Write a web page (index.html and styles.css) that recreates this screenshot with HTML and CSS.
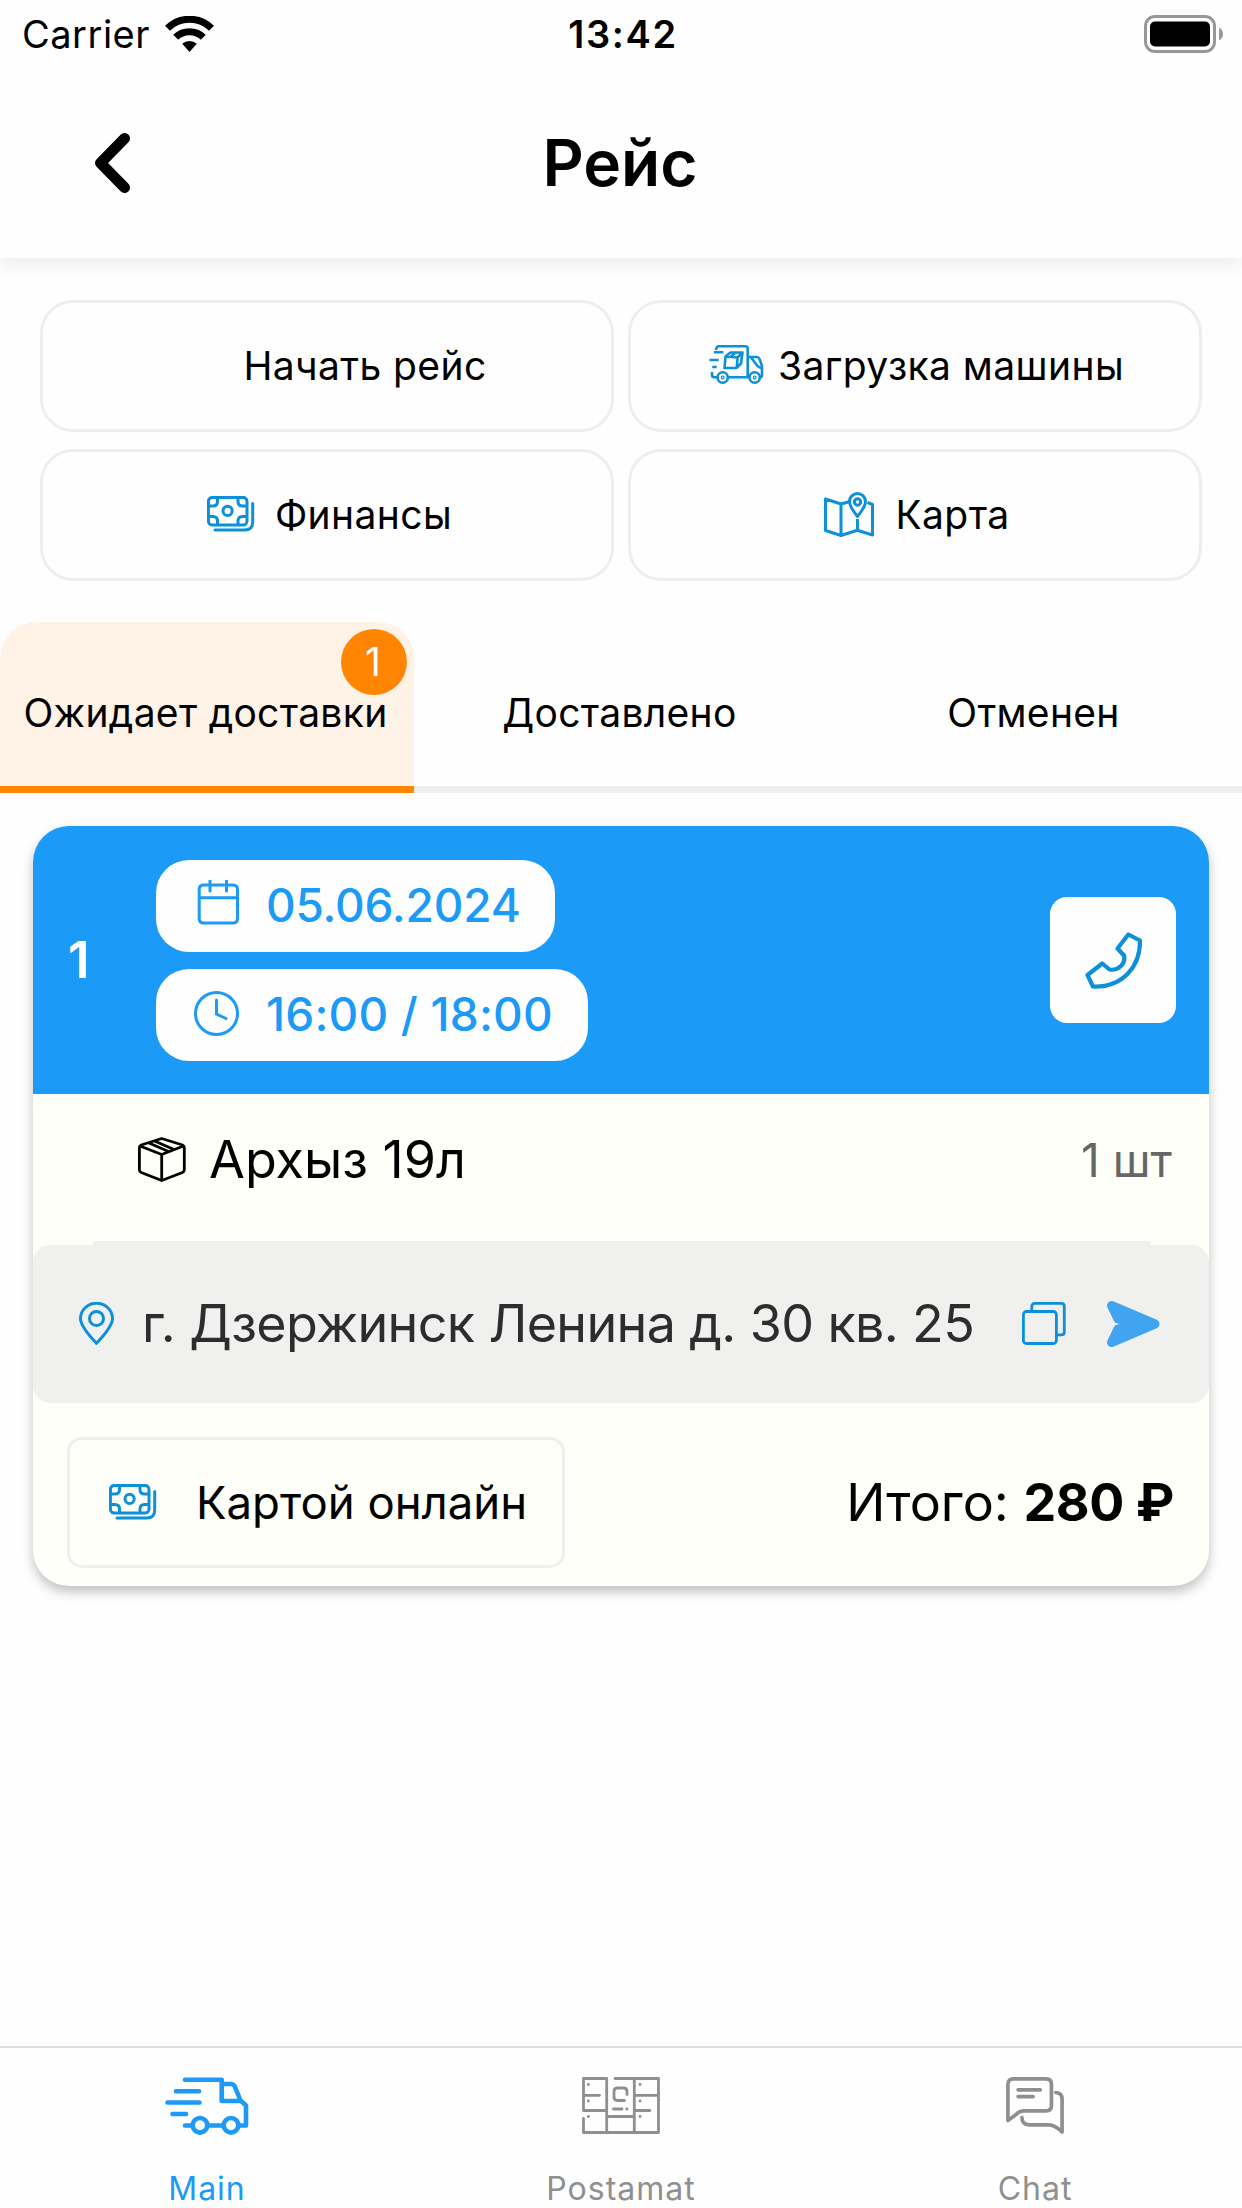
FILE: index.html
```html
<!DOCTYPE html>
<html lang="ru">
<head>
    <meta charset="UTF-8">
    <title>Рейс</title>
    <link rel="stylesheet" href="styles.css">
</head>
<body>
    <svg class="sprite" width="0" height="0">
        <symbol id="icon-money" viewBox="0 0 48 36">
            <rect x="1.4" y="1.4" width="38.6" height="27.6" rx="4"/>
            <circle cx="20.6" cy="14.9" r="4.6"/>
            <path d="M10.5 1.5v4q0 4.5-4.5 4.5H1.5M31 1.5v4q0 4.5 4.5 4.5H40M10.5 29v-4q0-4.5-4.5-4.5H1.5M31 29v-4q0-4.5 4.5-4.5H40"/>
            <path d="M45.7 7.5v18.5q0 8-8 8H8" stroke-linecap="round"/>
        </symbol>
    </svg>

    <div class="status-bar">
        <div class="carrier">
            <span>Carrier</span>
            <svg width="49" height="36" viewBox="0 0 49 36" fill="none" stroke="#000" stroke-width="7">
                <path d="M2.5 12.2a31.5 31.5 0 0 1 44 0"/>
                <path d="M10.7 21.3a20 20 0 0 1 27.6 0"/>
                <path d="M24.5 36l-7.3-8.2a11 11 0 0 1 14.6 0z" fill="#000" stroke="none"/>
            </svg>
        </div>
        <div class="time">13:42</div>
        <svg class="battery" width="80" height="38" viewBox="0 0 80 38">
            <rect x="1.5" y="1.5" width="69" height="35" rx="9.5" fill="none" stroke="#979797" stroke-width="3"/>
            <rect x="6" y="6.5" width="60" height="25" rx="5" fill="#000"/>
            <path d="M75 12.5q4 2 4 6.5t-4 6.5z" fill="#979797"/>
        </svg>
    </div>

    <header class="header">
        <svg class="back" width="36" height="60" viewBox="0 0 36 60">
            <path d="M30.5 5.5L6.5 30l24 24.5" fill="none" stroke="#000" stroke-width="11" stroke-linecap="round" stroke-linejoin="round"/>
        </svg>
        <h1>Рейс</h1>
    </header>

    <div class="actions">
        <div class="action action-start"><span>Начать рейс</span></div>
        <div class="action action-load">
            <svg class="icon" width="56" height="40" viewBox="0 0 56 40" stroke-width="2.6">
                <path d="M6.7 5l1-2.5q.4-1.2 2-1.2H36.5q2.2 0 2.2 2.2v28.5M5 7.3h9.3M.5 15h9.2M3.3 22h4.4M3 27v3q0 2.3 2.5 2.3H8M19 32.3h21.5"/>
                <path d="M38.7 12h9.3q1.5 0 2.5 2l2.5 7v9q0 2.3-2 2.3M42 12.5l6.5 8.5 4 2.5"/>
                <path d="M16.5 11.5l-1 11.5h11q1.2 0 1.3-1.2l.8-9.3zM16.5 11.5l5-4H33.5l-5 5M33.5 7.5l-1.5 11-4.5 4.5M26 8l-4.5 4"/>
                <circle cx="13.7" cy="32.5" r="5.2"/><circle cx="45.7" cy="32.5" r="5.2"/>
                <circle cx="13.7" cy="32.5" r=".6"/><circle cx="45.7" cy="32.5" r=".6"/>
            </svg>
            <span>Загрузка машины</span>
        </div>
        <div class="action action-money">
            <svg class="icon" width="48" height="36" stroke-width="3"><use href="#icon-money"/></svg>
            <span>Финансы</span>
        </div>
        <div class="action action-map">
            <svg class="icon" width="50" height="45" viewBox="0 0 50 45" stroke-width="3">
                <path d="M26 9.5l-9 2.5L1.5 7v31.5L17 43.5l16.3-5.3L48.5 43V12.5l-5-2M17 12v31.5M33.5 27v11"/>
                <path d="M33.5 24.5q-8-10-8-15a8 8 0 0 1 16 0q0 5-8 15z"/>
                <circle cx="33.5" cy="10" r="3.2"/>
            </svg>
            <span>Карта</span>
        </div>
    </div>

    <nav class="tabs">
        <div class="tab active">Ожидает доставки<span class="badge">1</span></div>
        <div class="tab">Доставлено</div>
        <div class="tab">Отменен</div>
    </nav>

    <section class="card">
        <div class="card-header">
            <div class="number">1</div>
            <div class="pills">
                <div class="pill pill-date">
                    <svg width="45" height="45" viewBox="-4 0 45 45">
                        <path d="M5 5H35q4.5 0 4.5 4.5v29q0 4.5-4.5 4.5H5.5Q1.2 43 1.2 38.5v-29Q1.2 5 5.5 5M1.2 17.8h38.3M12 1v10M28.5 1v10"/>
                    </svg>
                    <span>05.06.2024</span>
                </div>
                <div class="pill pill-time">
                    <svg width="45" height="45" viewBox="0 0 45 45">
                        <circle cx="22.5" cy="22.5" r="21"/>
                        <path d="M22.5 9v14l9.5 4.5"/>
                    </svg>
                    <span>16:00 / 18:00</span>
                </div>
            </div>
            <div class="phone">
                <svg class="icon" width="57" height="57" viewBox="0 0 57 57" stroke-width="4.2">
                    <path d="M43.3 2.5L55 8.5C55.5 34 38 55.5 8 54.5L2.5 43 17.3 31.5l7.2 6C33 39 41 32 39 23.5l-6.5-7z"/>
                </svg>
            </div>
        </div>

        <div class="product">
            <svg width="48" height="45" viewBox="0 0 48 45" fill="none" stroke="#000" stroke-width="2.8" stroke-linejoin="round">
                <path d="M23.7 1.5L44.5 8q1.8.7 1.8 2.5v22.5q0 1.8-1.8 2.5L23.7 43.5 3.2 35.5q-1.8-.7-1.8-2.5V10.5Q1.4 8.7 3.2 8z"/>
                <path d="M2 9l21.7 8.5L45.500 9M23.700 17v26M16.5 4l19.5 8.5M11 6l19.5 8.5"/>
            </svg>
            <span class="product-name">Архыз 19л</span>
            <span class="product-count">1 шт</span>
        </div>

        <div class="divider"></div>

        <div class="address">
            <svg class="icon" width="35" height="43" viewBox="0 0 35 43" stroke-width="3">
                <path d="M17.5 41.3Q1.5 24.5 1.5 16.5a16 15.2 0 0 1 32 0q0 8-16 24.8z"/>
                <circle cx="17.5" cy="16.5" r="7"/>
            </svg>
            <span class="address-text">г. Дзержинск Ленина д. 30 кв. 25</span>
            <svg class="icon" width="44" height="43" viewBox="0 0 44 43" stroke-width="2.8">
                <rect x="1.4" y="9.5" width="33" height="32" rx="3"/>
                <path d="M9.8 9.5V4.4q0-3 3-3h26.5q3 0 3 3v25.5q0 3-3 3h-5"/>
            </svg>
            <svg class="send" width="54" height="48" viewBox="0 0 54 48">
                <path d="M5.5 5.5L49 24 5.5 42.5 12 29 30 24 12 19z"/>
            </svg>
        </div>

        <div class="card-footer">
            <div class="payment">
                <svg class="icon" width="48" height="36" stroke-width="3"><use href="#icon-money"/></svg>
                <span>Картой онлайн</span>
            </div>
            <div class="total">Итого: <b>280 ₽</b></div>
        </div>
    </section>

    <footer class="bottom-nav">
        <div class="nav-item selected">
            <svg width="84" height="58" viewBox="0 0 84 58" stroke-width="4.6">
                <path d="M20 2.7h36.7V24H76M57 7h8.5q3.5 0 4.5 3l5.5 13.5 5.5 5v20H74M43.5 48.5H58M20 48.5h7M11 14.3h23M2.5 25.5h32M7.5 37h13.5"/>
                <circle cx="35" cy="48.3" r="7.3"/><circle cx="66" cy="48.3" r="7.3"/>
            </svg>
            <span>Main</span>
        </div>
        <div class="nav-item">
            <svg width="78" height="58" viewBox="0 0 78 58" stroke-width="2.8">
                <path d="M1.5 41.5V55.5h75V1.5H33M24.7 55.5V1.500H1.5v32h23M1.5 18.3h16M52.3 1.5v54M52.3 18.3h24M52.3 33.5h15.5M24.7 39.5h27.6"/>
                <path d="M45 17.5v-3q0-3.5-3.5-3.5h-6q-3.5 0-3.5 3.5v5.5q0 3.5 3.5 3.5h7M31.5 32h8.5M44.8 32h.1M6.3 7.5h.1M6.3 24h.1M6.3 39.5h.1M58 7.5h.1M58 24h.1M58 39.5h.1"/>
            </svg>
            <span>Postamat</span>
        </div>
        <div class="nav-item">
            <svg width="60" height="60" viewBox="0 0 60 60" stroke-width="3.8">
                <path d="M2 45V7.5Q2 2 7.5 2h34Q47 2 47 7.5v22q0 5.500-5.500 5.500H18q-4 0-8 4zM12.5 13.3h23M12.5 20.3h15.5"/>
                <path d="M51.5 16q6.5.5 6.5 6.5V57q-7-7.5-14-7.5H24q-7.5 0-7.5-7.5"/>
            </svg>
            <span>Chat</span>
        </div>
    </footer>
</body>
</html>
```

FILE: styles.css
```css
* {
    box-sizing: border-box;
}

body {
    margin: 0;
    width: 1242px;
    height: 2208px;
    display: flex;
    flex-direction: column;
    overflow: hidden;
    background-color: #fefefe;
    font-family: Inter, "Liberation Sans", sans-serif;
    color: #000;
    white-space: nowrap;
}

.sprite {
    position: absolute;
}

.icon {
    flex: none;
    fill: none;
    stroke: #0b90d9;
    stroke-linejoin: round;
}

/* status bar */
.status-bar {
    height: 66px;
    padding: 1px 18px 0 22px;
    display: grid;
    grid-template-columns: 1fr auto 1fr;
    align-items: center;
    font-size: 38px;
}

.carrier {
    display: flex;
    align-items: center;
    gap: 15px;
    letter-spacing: 0.5px;
}

.time {
    font-weight: 600;
    letter-spacing: 1.6px;
}

.battery {
    justify-self: end;
}

/* header */
.header {
    height: 192px;
    padding: 1px 96px 0 94px;
    display: grid;
    grid-template-columns: 1fr auto 1fr;
    align-items: center;
    box-shadow: 0 6px 18px rgba(0, 0, 0, 0.08);
    clip-path: inset(0 0 -40px 0);
}

.header h1 {
    margin: 0;
    font-size: 64px;
    font-weight: 600;
}

/* action buttons */
.actions {
    margin-top: 42px;
    padding: 0 40px;
    display: grid;
    grid-template-columns: 1fr 1fr;
    gap: 17px 14px;
}

.action {
    height: 132px;
    padding-bottom: 2px;
    border: 3px solid #eee;
    border-radius: 33px;
    display: flex;
    align-items: center;
    justify-content: center;
    font-size: 39px;
    letter-spacing: 0.4px;
}

.action-start {
    padding-left: 76px;
}

.action-load {
    gap: 13px;
    padding-left: 3px;
}

.action-money {
    gap: 20px;
    padding-left: 5px;
}

.action-map {
    gap: 21px;
    padding-left: 4px;
}

/* tabs */
.tabs {
    margin-top: 41px;
    display: grid;
    grid-template-columns: repeat(3, 1fr);
}

.tab {
    position: relative;
    height: 171px;
    padding: 16px 3px 0 0;
    border-bottom: 7px solid #eee;
    display: flex;
    align-items: center;
    justify-content: center;
    font-size: 39px;
    letter-spacing: 0.3px;
}

.tab.active {
    border-bottom: none;
    border-radius: 36px 36px 0 0;
    padding-bottom: 7px;
    background: linear-gradient(to top, #ff8502 7px, #fff3e7 7px);
}

.badge {
    position: absolute;
    top: 7px;
    right: 7px;
    width: 66px;
    height: 66px;
    padding-right: 2px;
    border-radius: 50%;
    background-color: #ff8502;
    color: #fff;
    line-height: 65px;
    text-align: center;
}

/* order card */
.card {
    margin: 33px 33px 0;
    height: 760px;
    border-radius: 36px;
    overflow: hidden;
    background-color: #fefff9;
    box-shadow: 0 6px 12px rgba(0, 0, 0, 0.24);
}

.card-header {
    height: 268px;
    padding: 0 33px 0 35px;
    display: flex;
    align-items: center;
    background-color: #1b9af7;
}

.number {
    width: 88px;
    padding-bottom: 2px;
    color: #fff;
    font-size: 51px;
    font-weight: 600;
}

.pills {
    flex: 1;
    display: flex;
    flex-direction: column;
    gap: 17px;
}

.pill {
    height: 92px;
    padding: 0 0 2px 38px;
    border-radius: 33px;
    display: flex;
    align-items: center;
    gap: 27px;
    background-color: #fefefe;
    color: #1b9af7;
    font-size: 46px;
    font-weight: 500;
}

.pill svg {
    fill: none;
    stroke: #1b9af7;
    stroke-width: 3px;
    stroke-linecap: round;
}

.pill-date {
    width: 399px;
    letter-spacing: -0.2px;
}

.pill-date svg {
    margin-bottom: 4px;
}

.pill-time {
    width: 432px;
    letter-spacing: 0.2px;
}

.phone {
    width: 126px;
    height: 126px;
    border-radius: 17px;
    display: flex;
    align-items: center;
    justify-content: center;
    background-color: #fefefe;
}

.product {
    height: 147px;
    padding: 0 37px 16px 105px;
    display: flex;
    align-items: center;
}

.product-name {
    margin-left: 23px;
    flex: 1;
    font-size: 52px;
}

.product-count {
    color: #666;
    font-size: 46px;
}

.divider {
    height: 4px;
    margin: 0 58px 0 60px;
    background-color: #f0f0ef;
}

.address {
    height: 158px;
    padding: 0 49px 1px 46px;
    border-radius: 17px;
    display: flex;
    align-items: center;
    background-color: #f0f0ef;
}

.address-text {
    margin-left: 28px;
    flex: 1;
    color: #2d2d2d;
    font-size: 52px;
    letter-spacing: -0.62px;
}

.send {
    margin-left: 40px;
    fill: #41a4f0;
    stroke: #41a4f0;
    stroke-width: 9px;
    stroke-linejoin: round;
}

.card-footer {
    padding: 34px 35px 0 34px;
    display: flex;
    align-items: center;
    justify-content: space-between;
}

.payment {
    width: 498px;
    height: 131px;
    padding: 0 0 1px 39px;
    border: 3px solid #efeff0;
    border-radius: 15px;
    display: flex;
    align-items: center;
    gap: 39px;
    font-size: 45.5px;
}

.total {
    font-size: 52px;
}

.total b {
    letter-spacing: -0.4px;
}

/* bottom navigation */
.bottom-nav {
    margin-top: auto;
    height: 162px;
    padding-top: 29px;
    border-top: 2px solid #dedede;
    display: grid;
    grid-template-columns: repeat(3, 1fr);
}

.nav-item {
    display: flex;
    flex-direction: column;
    align-items: center;
    gap: 35px;
    color: #8f8f8f;
    font-size: 32px;
    line-height: 38px;
    letter-spacing: 1px;
}

.nav-item svg {
    height: 58px;
    fill: none;
    stroke: currentColor;
    stroke-linecap: round;
    stroke-linejoin: round;
}

.nav-item.selected {
    color: #1b9af7;
}
```
